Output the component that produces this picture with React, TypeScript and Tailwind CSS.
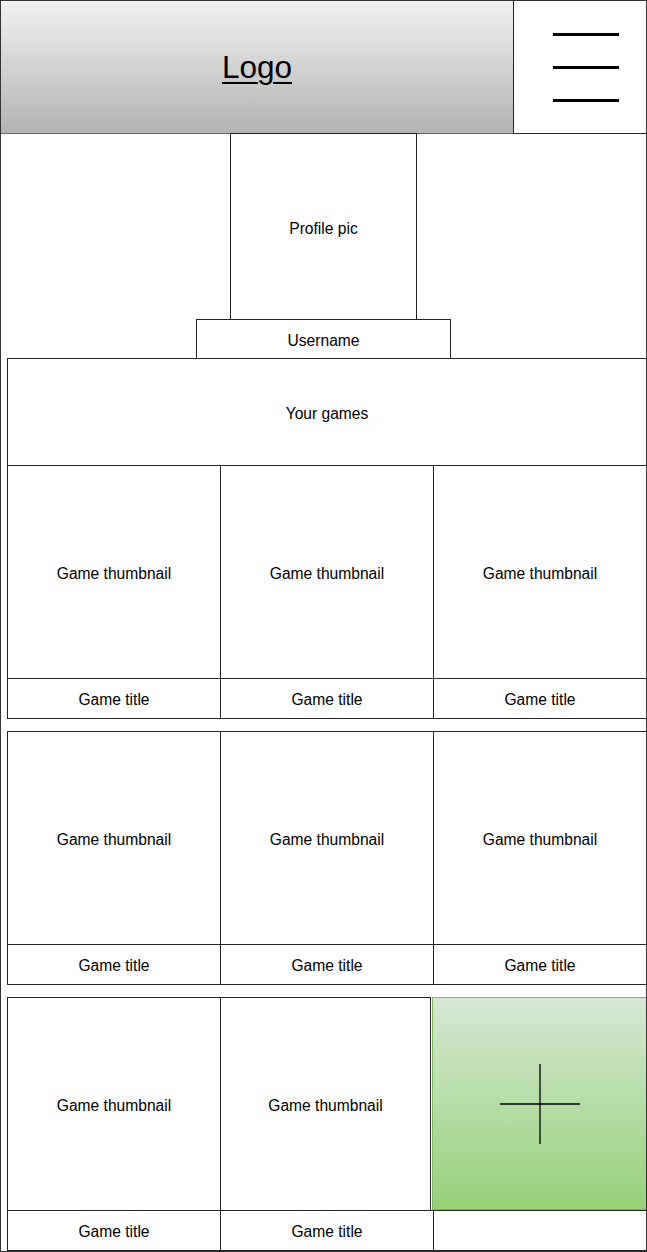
import React from "react";

const font = { fontFamily: '"Liberation Sans", Arial, Helvetica, sans-serif' };

function Cell({ title, first }: { title: string; first?: boolean }) {
  return (
    <div className={`flex w-[214px] flex-col ${first ? "" : "-ml-px"}`}>
      <div className="flex h-[214px] items-center justify-center border border-[#222] bg-white pt-[3px] text-[15.6px] text-black">
        Game thumbnail
      </div>
      <div className="-mt-px flex h-[41px] items-center justify-center border border-[#222] bg-white pt-[2px] text-[15.6px] text-black">
        {title}
      </div>
    </div>
  );
}

function Row() {
  return (
    <div className="-mr-px ml-[6px] flex">
      <Cell title="Game title" first />
      <Cell title="Game title" />
      <Cell title="Game title" />
    </div>
  );
}

export default function App() {
  return (
    <div
      className="flex h-[1252px] w-[647px] flex-col overflow-hidden border border-[#333] bg-white"
      style={font}
    >
      {/* Header */}
      <div className="-mx-px -mt-px flex h-[134px]">
        <div className="flex h-[134px] w-[514px] items-center justify-center border border-[#666] bg-gradient-to-b from-[#f2f2f2] to-[#b3b3b3] pt-[2px]">
          <span className="text-[31.5px] leading-none text-black underline decoration-[2px] underline-offset-[4px]">
            Logo
          </span>
        </div>
        <div className="-ml-px flex h-[134px] w-[134px] flex-col items-center justify-center gap-[30px] border border-[#222] bg-white pl-[12px]">
          <div className="h-[3px] w-[66px] bg-black" />
          <div className="h-[3px] w-[66px] bg-black" />
          <div className="h-[3px] w-[66px] bg-black" />
        </div>
      </div>

      {/* Profile */}
      <div className="mx-auto -mt-px flex h-[188px] w-[187px] items-center justify-center border border-[#222] pt-[3px] text-[15.6px] text-black">
        Profile pic
      </div>
      <div className="mx-auto -mt-px flex h-[40px] w-[255px] items-center justify-center border border-[#222] pt-[2px] text-[15.6px] text-black">
        Username
      </div>

      {/* Your games */}
      <div className="-mr-px -mt-px ml-[6px] flex h-[108px] items-center justify-center border border-[#222] pt-[3px] text-[15.6px] text-black">
        Your games
      </div>

      <div className="-mt-px">
        <Row />
      </div>
      <div className="mt-[12px]">
        <Row />
      </div>

      {/* Row 3 */}
      <div className="-mr-px ml-[6px] mt-[12px] flex">
        <Cell title="Game title" first />
        <div className="-ml-px flex w-[214px] flex-col">
          <div className="flex h-[214px] w-[211px] items-center justify-center border border-[#222] bg-white pt-[3px] text-[15.6px] text-black">
            Game thumbnail
          </div>
          <div className="-mt-px flex h-[41px] items-center justify-center border border-[#222] bg-white pt-[2px] text-[15.6px] text-black">
            Game title
          </div>
        </div>
        <div className="-ml-px flex w-[214px] flex-col">
          <div className="-ml-px flex h-[213px] w-[215px] items-center justify-center border border-[#82b366] bg-gradient-to-b from-[#d5e8d4] to-[#97d077]">
            <svg width="80" height="80" viewBox="0 0 80 80">
              <line x1="0" y1="40" x2="80" y2="40" stroke="#000" strokeWidth="1.3" />
              <line x1="40" y1="0" x2="40" y2="80" stroke="#000" strokeWidth="1.3" />
            </svg>
          </div>
          <div className="flex h-[41px] items-center justify-center border border-[#222] bg-white" />
        </div>
      </div>
    </div>
  );
}
